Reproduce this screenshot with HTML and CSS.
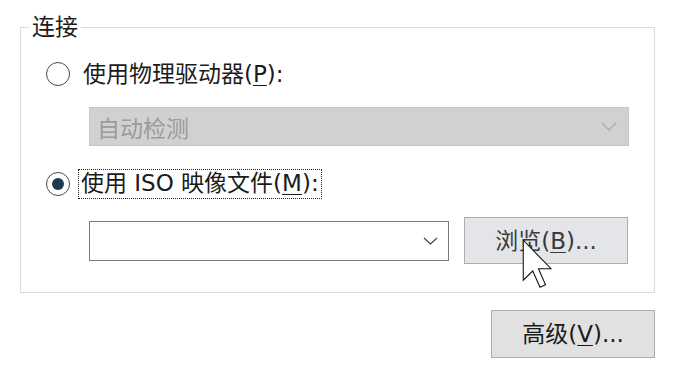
FILE: index.html
```html
<!DOCTYPE html>
<html lang="zh-CN">
<head>
<meta charset="utf-8">
<title>连接</title>
<link rel="stylesheet" href="styles.css">
</head>
<body>
<div class="dialog">
  <fieldset class="group">
    <legend class="group-title">连接</legend>
    <label class="radio-row first">
      <span class="radio"></span>
      <span class="radio-text">使用物理驱动器(<u>P</u>):</span>
    </label>
    <div class="select disabled">
      <span class="select-value">自动检测</span>
      <svg class="chevron" width="16" height="9" viewBox="0 0 16 9"><path d="M1 1 L8 8 L15 1" fill="none" stroke="#a8a8a8" stroke-width="1.2"/></svg>
    </div>
    <label class="radio-row second">
      <span class="radio checked"></span>
      <span class="radio-text focused">使用 ISO 映像文件(<u>M</u>):</span>
    </label>
    <div class="file-row">
      <div class="combo">
        <svg class="chevron" width="15" height="8" viewBox="0 0 15 8"><path d="M1 1 L7.5 7 L14 1" fill="none" stroke="#444" stroke-width="1.2"/></svg>
      </div>
      <button class="btn browse" type="button">浏览(<u>B</u>)...</button>
    </div>
  </fieldset>
  <div class="footer">
    <button class="btn" type="button">高级(<u>V</u>)...</button>
  </div>
  <svg class="cursor" width="30" height="50" viewBox="0 0 12 20"><path d="M0.5 0.5 L0.5 16.5 L4.3 12.8 L7.2 19.3 L9.4 18.3 L6.6 11.9 L11.6 11.9 Z" fill="#fff" stroke="#111" stroke-width="0.42" stroke-linejoin="miter"/></svg>
</div>
</body>
</html>
```
FILE: styles.css
```css
html, body {
  margin: 0;
  padding: 0;
  background: #ffffff;
}
body {
  font-family: "DejaVu Sans", "Noto Sans CJK SC", sans-serif;
  font-size: 23px;
  color: #1b1b1b;
}
.dialog {
  position: relative;
  width: 676px;
  height: 378px;
  padding-top: 14px;
  box-sizing: border-box;
}
.group {
  margin: 0 0 0 20px;
  width: 635px;
  box-sizing: border-box;
  border: 1px solid #dcdcdc;
  padding: 0 0 28px 0;
  min-width: 0;
}
.group-title {
  margin-left: 8px;
  padding: 0 3px;
  font-size: 23px;
  line-height: 26px;
  color: #1b1b1b;
}
.radio-row {
  display: flex;
  align-items: center;
  height: 30px;
  margin-left: 25px;
}
.radio-row.first { margin-top: 19px; }
.radio-row.second { margin-top: 23px; }
.radio {
  width: 24px;
  height: 24px;
  box-sizing: border-box;
  border: 1.6px solid #4a4a4a;
  border-radius: 50%;
  display: flex;
  align-items: center;
  justify-content: center;
  background: #fff;
  flex: none;
}
.radio.checked::after {
  content: "";
  width: 12px;
  height: 12px;
  border-radius: 50%;
  background: #1d3a50;
}
.radio-text {
  margin-left: 12px;
  line-height: 26px;
  padding: 0 1px;
  white-space: nowrap;
}
.radio-text.focused {
  margin-left: 9px;
  outline: 1px dotted #222;
  outline-offset: 0;
  padding: 0 2px 2px 2px;
}
u {
  text-underline-offset: 3px;
  text-decoration-thickness: 1px;
}
.select {
  margin: 18px 0 0 68px;
  width: 540px;
  height: 39px;
  box-sizing: border-box;
  display: flex;
  align-items: center;
  justify-content: space-between;
  padding: 0 11px 0 7px;
}
.select.disabled {
  background: #d1d1d1;
  border: 1px solid #c6c6c6;
  color: #9b9b9b;
}
.file-row {
  display: flex;
  align-items: center;
  gap: 15px;
  margin: 18px 0 0 68px;
}
.combo {
  width: 360px;
  height: 40px;
  box-sizing: border-box;
  border: 1.5px solid #7a7a7a;
  background: #fff;
  display: flex;
  align-items: center;
  justify-content: flex-end;
  padding-right: 10px;
}
.btn {
  width: 164px;
  height: 48px;
  box-sizing: border-box;
  border: 1px solid #adadad;
  background: #e1e1e1;
  font-family: "DejaVu Sans", "Noto Sans CJK SC", sans-serif;
  font-size: 23px;
  color: #1b1b1b;
  padding: 0;
  margin: 0;
  line-height: 26px;
}
.btn.browse {
  height: 47px;
  background: #e4e5e8;
  color: #3a3a3a;
}
.footer {
  display: flex;
  justify-content: flex-end;
  margin: 17px 21px 0 0;
}
.cursor {
  position: absolute;
  left: 522px;
  top: 239px;
}
```
